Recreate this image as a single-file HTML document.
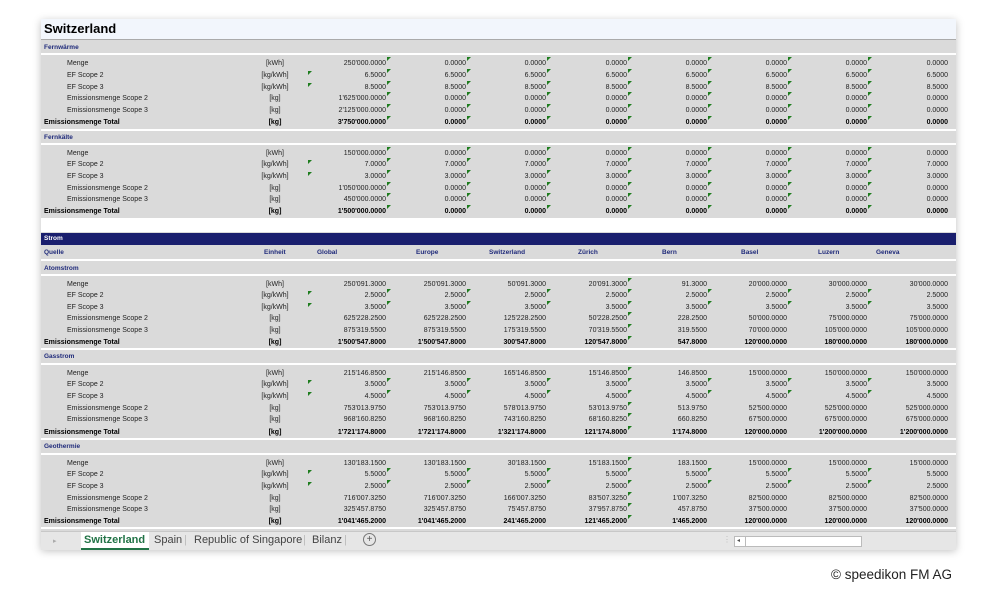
<!DOCTYPE html>
<html><head><meta charset="utf-8"><style>
body{margin:0;width:1000px;height:600px;background:#fff;position:relative;overflow:hidden;font-family:"Liberation Sans",sans-serif}
.pn{position:absolute;left:41px;top:19px;width:915px;height:530px;background:#dadada;box-shadow:0 2px 8px rgba(0,0,0,.25)}
.ttl{position:absolute;left:41px;top:19px;width:915px;height:20px;background:#f2f6fc;border-bottom:1px solid #aaa}
.ttl span{position:absolute;left:3px;top:2px;font-size:13px;font-weight:bold;color:#000}
.wl{position:absolute;left:41px;width:915px;height:2px;background:#fff}
.h{position:absolute;left:44px;font-size:6.5px;font-weight:bold;color:#1f2a7a;line-height:10px}
.r{position:absolute;left:0;width:1000px;height:11px;font-size:7px;line-height:11px;color:#222}
.r b{position:absolute;left:67px;font-weight:normal}
.r.t b{left:44px;font-weight:bold}
.r.t{font-weight:bold;color:#000}
.r u{position:absolute;left:240px;width:70px;text-align:center;text-decoration:none}
.r.e u::after{content:"";position:absolute;left:68px;top:1px;border-top:4px solid #1e7d1e;border-right:4px solid transparent}
.r s{position:absolute;width:100px;text-align:right;text-decoration:none}
.r s::after{content:"";position:absolute;right:-5px;top:-1px;border-top:4px solid #1e7d1e;border-right:4px solid transparent}
.r s:nth-of-type(8)::after{display:none}
.r.n s::after{display:none}
.r.n s:nth-of-type(4)::after{display:block}
.r s:nth-of-type(1){left:286px}.r s:nth-of-type(2){left:366px}.r s:nth-of-type(3){left:446px}.r s:nth-of-type(4){left:527px}
.r s:nth-of-type(5){left:607px}.r s:nth-of-type(6){left:687px}.r s:nth-of-type(7){left:767px}.r s:nth-of-type(8){left:848px}
.strom{position:absolute;left:41px;top:233px;width:915px;height:12px;background:#1a1f6e;color:#fff;font-size:6.5px;font-weight:bold;line-height:12px}
.strom span{margin-left:3px}
.q{position:absolute;top:248px;font-size:6.5px;font-weight:bold;color:#1f2a7a;line-height:10px}
.white{position:absolute;left:41px;top:218px;width:915px;height:14px;background:#fff}
.tabs{position:absolute;left:41px;top:531px;width:915px;height:18px;background:#e6e6e6;border-top:1px solid #c8c8c8;font-size:11px;color:#444}
.tabs span{position:absolute;top:2px}
.sb{position:absolute;left:734px;top:536px;width:128px;height:11px;background:#fff;border:1px solid #bbb;box-sizing:border-box}
</style></head><body>
<div class="pn"></div>
<div class="ttl"><span>Switzerland</span></div>
<div class="h" style="top:43px">Fernwärme</div>
<div class="wl" style="top:53px"></div>
<div class="r" style="top:58px"><b>Menge</b><u>[kWh]</u><s>250'000.0000</s><s>0.0000</s><s>0.0000</s><s>0.0000</s><s>0.0000</s><s>0.0000</s><s>0.0000</s><s>0.0000</s></div>
<div class="r e" style="top:70px"><b>EF Scope 2</b><u>[kg/kWh]</u><s>6.5000</s><s>6.5000</s><s>6.5000</s><s>6.5000</s><s>6.5000</s><s>6.5000</s><s>6.5000</s><s>6.5000</s></div>
<div class="r e" style="top:82px"><b>EF Scope 3</b><u>[kg/kWh]</u><s>8.5000</s><s>8.5000</s><s>8.5000</s><s>8.5000</s><s>8.5000</s><s>8.5000</s><s>8.5000</s><s>8.5000</s></div>
<div class="r" style="top:93px"><b>Emissionsmenge Scope 2</b><u>[kg]</u><s>1'625'000.0000</s><s>0.0000</s><s>0.0000</s><s>0.0000</s><s>0.0000</s><s>0.0000</s><s>0.0000</s><s>0.0000</s></div>
<div class="r" style="top:105px"><b>Emissionsmenge Scope 3</b><u>[kg]</u><s>2'125'000.0000</s><s>0.0000</s><s>0.0000</s><s>0.0000</s><s>0.0000</s><s>0.0000</s><s>0.0000</s><s>0.0000</s></div>
<div class="r t" style="top:117px"><b>Emissionsmenge Total</b><u>[kg]</u><s>3'750'000.0000</s><s>0.0000</s><s>0.0000</s><s>0.0000</s><s>0.0000</s><s>0.0000</s><s>0.0000</s><s>0.0000</s></div>
<div class="wl" style="top:129px"></div>
<div class="h" style="top:133px">Fernkälte</div>
<div class="wl" style="top:143px"></div>
<div class="r" style="top:148px"><b>Menge</b><u>[kWh]</u><s>150'000.0000</s><s>0.0000</s><s>0.0000</s><s>0.0000</s><s>0.0000</s><s>0.0000</s><s>0.0000</s><s>0.0000</s></div>
<div class="r e" style="top:159px"><b>EF Scope 2</b><u>[kg/kWh]</u><s>7.0000</s><s>7.0000</s><s>7.0000</s><s>7.0000</s><s>7.0000</s><s>7.0000</s><s>7.0000</s><s>7.0000</s></div>
<div class="r e" style="top:171px"><b>EF Scope 3</b><u>[kg/kWh]</u><s>3.0000</s><s>3.0000</s><s>3.0000</s><s>3.0000</s><s>3.0000</s><s>3.0000</s><s>3.0000</s><s>3.0000</s></div>
<div class="r" style="top:183px"><b>Emissionsmenge Scope 2</b><u>[kg]</u><s>1'050'000.0000</s><s>0.0000</s><s>0.0000</s><s>0.0000</s><s>0.0000</s><s>0.0000</s><s>0.0000</s><s>0.0000</s></div>
<div class="r" style="top:194px"><b>Emissionsmenge Scope 3</b><u>[kg]</u><s>450'000.0000</s><s>0.0000</s><s>0.0000</s><s>0.0000</s><s>0.0000</s><s>0.0000</s><s>0.0000</s><s>0.0000</s></div>
<div class="r t" style="top:206px"><b>Emissionsmenge Total</b><u>[kg]</u><s>1'500'000.0000</s><s>0.0000</s><s>0.0000</s><s>0.0000</s><s>0.0000</s><s>0.0000</s><s>0.0000</s><s>0.0000</s></div>
<div class="white"></div>
<div class="strom"><span>Strom</span></div>
<div class="q" style="left:44px">Quelle</div><div class="q" style="left:264px">Einheit</div><div class="q" style="left:317px">Global</div><div class="q" style="left:416px">Europe</div><div class="q" style="left:489px">Switzerland</div><div class="q" style="left:578px">Zürich</div><div class="q" style="left:662px">Bern</div><div class="q" style="left:741px">Basel</div><div class="q" style="left:818px">Luzern</div><div class="q" style="left:876px">Geneva</div>
<div class="wl" style="top:259px"></div>
<div class="h" style="top:264px">Atomstrom</div>
<div class="wl" style="top:274px"></div>
<div class="r n" style="top:279px"><b>Menge</b><u>[kWh]</u><s>250'091.3000</s><s>250'091.3000</s><s>50'091.3000</s><s>20'091.3000</s><s>91.3000</s><s>20'000.0000</s><s>30'000.0000</s><s>30'000.0000</s></div>
<div class="r e" style="top:290px"><b>EF Scope 2</b><u>[kg/kWh]</u><s>2.5000</s><s>2.5000</s><s>2.5000</s><s>2.5000</s><s>2.5000</s><s>2.5000</s><s>2.5000</s><s>2.5000</s></div>
<div class="r e" style="top:302px"><b>EF Scope 3</b><u>[kg/kWh]</u><s>3.5000</s><s>3.5000</s><s>3.5000</s><s>3.5000</s><s>3.5000</s><s>3.5000</s><s>3.5000</s><s>3.5000</s></div>
<div class="r n" style="top:313px"><b>Emissionsmenge Scope 2</b><u>[kg]</u><s>625'228.2500</s><s>625'228.2500</s><s>125'228.2500</s><s>50'228.2500</s><s>228.2500</s><s>50'000.0000</s><s>75'000.0000</s><s>75'000.0000</s></div>
<div class="r n" style="top:325px"><b>Emissionsmenge Scope 3</b><u>[kg]</u><s>875'319.5500</s><s>875'319.5500</s><s>175'319.5500</s><s>70'319.5500</s><s>319.5500</s><s>70'000.0000</s><s>105'000.0000</s><s>105'000.0000</s></div>
<div class="r t n" style="top:337px"><b>Emissionsmenge Total</b><u>[kg]</u><s>1'500'547.8000</s><s>1'500'547.8000</s><s>300'547.8000</s><s>120'547.8000</s><s>547.8000</s><s>120'000.0000</s><s>180'000.0000</s><s>180'000.0000</s></div>
<div class="wl" style="top:348px"></div>
<div class="h" style="top:352px">Gasstrom</div>
<div class="wl" style="top:363px"></div>
<div class="r n" style="top:368px"><b>Menge</b><u>[kWh]</u><s>215'146.8500</s><s>215'146.8500</s><s>165'146.8500</s><s>15'146.8500</s><s>146.8500</s><s>15'000.0000</s><s>150'000.0000</s><s>150'000.0000</s></div>
<div class="r e" style="top:379px"><b>EF Scope 2</b><u>[kg/kWh]</u><s>3.5000</s><s>3.5000</s><s>3.5000</s><s>3.5000</s><s>3.5000</s><s>3.5000</s><s>3.5000</s><s>3.5000</s></div>
<div class="r e" style="top:391px"><b>EF Scope 3</b><u>[kg/kWh]</u><s>4.5000</s><s>4.5000</s><s>4.5000</s><s>4.5000</s><s>4.5000</s><s>4.5000</s><s>4.5000</s><s>4.5000</s></div>
<div class="r n" style="top:403px"><b>Emissionsmenge Scope 2</b><u>[kg]</u><s>753'013.9750</s><s>753'013.9750</s><s>578'013.9750</s><s>53'013.9750</s><s>513.9750</s><s>52'500.0000</s><s>525'000.0000</s><s>525'000.0000</s></div>
<div class="r n" style="top:414px"><b>Emissionsmenge Scope 3</b><u>[kg]</u><s>968'160.8250</s><s>968'160.8250</s><s>743'160.8250</s><s>68'160.8250</s><s>660.8250</s><s>67'500.0000</s><s>675'000.0000</s><s>675'000.0000</s></div>
<div class="r t n" style="top:427px"><b>Emissionsmenge Total</b><u>[kg]</u><s>1'721'174.8000</s><s>1'721'174.8000</s><s>1'321'174.8000</s><s>121'174.8000</s><s>1'174.8000</s><s>120'000.0000</s><s>1'200'000.0000</s><s>1'200'000.0000</s></div>
<div class="wl" style="top:438px"></div>
<div class="h" style="top:442px">Geothermie</div>
<div class="wl" style="top:453px"></div>
<div class="r n" style="top:458px"><b>Menge</b><u>[kWh]</u><s>130'183.1500</s><s>130'183.1500</s><s>30'183.1500</s><s>15'183.1500</s><s>183.1500</s><s>15'000.0000</s><s>15'000.0000</s><s>15'000.0000</s></div>
<div class="r e" style="top:469px"><b>EF Scope 2</b><u>[kg/kWh]</u><s>5.5000</s><s>5.5000</s><s>5.5000</s><s>5.5000</s><s>5.5000</s><s>5.5000</s><s>5.5000</s><s>5.5000</s></div>
<div class="r e" style="top:481px"><b>EF Scope 3</b><u>[kg/kWh]</u><s>2.5000</s><s>2.5000</s><s>2.5000</s><s>2.5000</s><s>2.5000</s><s>2.5000</s><s>2.5000</s><s>2.5000</s></div>
<div class="r n" style="top:493px"><b>Emissionsmenge Scope 2</b><u>[kg]</u><s>716'007.3250</s><s>716'007.3250</s><s>166'007.3250</s><s>83'507.3250</s><s>1'007.3250</s><s>82'500.0000</s><s>82'500.0000</s><s>82'500.0000</s></div>
<div class="r n" style="top:504px"><b>Emissionsmenge Scope 3</b><u>[kg]</u><s>325'457.8750</s><s>325'457.8750</s><s>75'457.8750</s><s>37'957.8750</s><s>457.8750</s><s>37'500.0000</s><s>37'500.0000</s><s>37'500.0000</s></div>
<div class="r t n" style="top:516px"><b>Emissionsmenge Total</b><u>[kg]</u><s>1'041'465.2000</s><s>1'041'465.2000</s><s>241'465.2000</s><s>121'465.2000</s><s>1'465.2000</s><s>120'000.0000</s><s>120'000.0000</s><s>120'000.0000</s></div>
<div class="wl" style="top:527px"></div>
<div class="tabs">
<span style="left:12px;font-size:7px;color:#aaa;top:5px">▸</span>
<div style="position:absolute;left:40px;top:0;width:68px;height:18px;background:#fff;border-bottom:2px solid #217346;box-sizing:border-box"></div>
<span style="left:43px;color:#217346;font-weight:bold">Switzerland</span>
<span style="left:113px">Spain</span>
<span style="left:143px;color:#bbb">|</span>
<span style="left:153px">Republic of Singapore</span>
<span style="left:262px;color:#bbb">|</span>
<span style="left:271px">Bilanz</span>
<span style="left:303px;color:#bbb">|</span>
<span style="left:322px;top:1px;width:11px;height:11px;border:1px solid #777;border-radius:50%;font-size:10px;line-height:11px;text-align:center;color:#555">+</span>
<span style="left:682px;color:#bbb;font-size:8px;top:3px">⋮</span>
</div>
<div class="sb"><span style="position:absolute;left:2px;top:0;font-size:6px;color:#555">◂</span><div style="position:absolute;left:10px;top:0;width:1px;height:9px;background:#bbb"></div></div>
<div style="position:absolute;left:831px;top:567px;font-size:13.5px;color:#222">© speedikon FM AG</div>
</body></html>
